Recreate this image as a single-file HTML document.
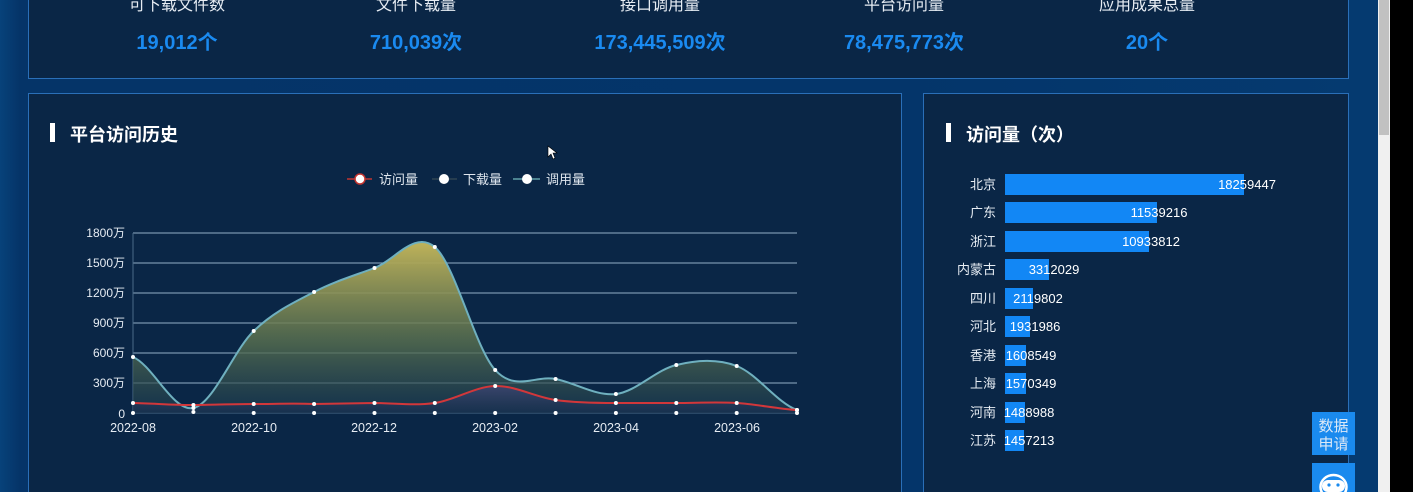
<!DOCTYPE html>
<html><head><meta charset="utf-8"><style>
*{margin:0;padding:0;box-sizing:border-box}
html,body{width:1413px;height:492px;overflow:hidden}
body{background:#000;position:relative;font-family:"Liberation Sans","Noto Sans CJK SC",sans-serif}
#bg{position:absolute;left:0;top:0;width:1378px;height:492px;background:linear-gradient(90deg,#07427a 0,#053468 20px,#04356a 900px,#053a70 1378px)}
.panel{position:absolute;background:#0a2646;border:1px solid #2a6fb8}
.sb{position:absolute;left:1378px;top:0;width:12px;height:492px;background:#f0f0f0}
.thumb{position:absolute;left:1379px;top:0;width:10px;height:135px;background:#c1c1c1}
.stat{position:absolute;width:240px;text-align:center}
.stat .l{color:#e6ecf3;font-size:16px;position:absolute;top:-9px;width:100%}
.stat .v{color:#1a8af0;font-size:20px;font-weight:bold;position:absolute;top:26px;width:100%}
.title{position:absolute;color:#fff;font-size:18px;font-weight:bold}
.title:before{content:"";position:absolute;left:-20px;top:2px;width:5px;height:19px;background:#fff}
</style></head><body>
<div id="bg"></div>
<div class="panel" style="left:28px;top:-2px;width:1321px;height:81px;"></div>
<div class="stat" style="left:57px;top:0"><div class="l">可下载文件数</div><div class="v">19,012个</div></div>
<div class="stat" style="left:296px;top:0"><div class="l">文件下载量</div><div class="v">710,039次</div></div>
<div class="stat" style="left:540px;top:0"><div class="l">接口调用量</div><div class="v">173,445,509次</div></div>
<div class="stat" style="left:784px;top:0"><div class="l">平台访问量</div><div class="v">78,475,773次</div></div>
<div class="stat" style="left:1027px;top:0"><div class="l">应用成果总量</div><div class="v">20个</div></div>

<div class="panel" style="left:28px;top:93px;width:874px;height:399px;border-bottom:none"></div>
<div class="panel" style="left:923px;top:93px;width:426px;height:399px;border-bottom:none"></div>
<div class="title" style="left:70px;top:121px">平台访问历史</div>
<div class="title" style="left:966px;top:121px">访问量（次）</div>

<svg style="position:absolute;left:0;top:0" width="1378" height="492">
<defs>
<linearGradient id="ga" x1="0" y1="240" x2="0" y2="413" gradientUnits="userSpaceOnUse"><stop offset="0" stop-color="#c2b55a"/><stop offset="0.6" stop-color="#58704f" stop-opacity=".8"/><stop offset="1" stop-color="#1a3a50" stop-opacity=".6"/></linearGradient>
<linearGradient id="gr" x1="0" y1="380" x2="0" y2="413" gradientUnits="userSpaceOnUse"><stop offset="0" stop-color="#4a4a80" stop-opacity=".8"/><stop offset="1" stop-color="#1a3050" stop-opacity=".5"/></linearGradient>
</defs>
<g font-size="13" fill="#dfe6ee">
<line x1="347" y1="179" x2="372" y2="179" stroke="#c23531" stroke-width="1.5"/><circle cx="360" cy="179" r="5" fill="#fff" stroke="#c23531" stroke-width="1.5"/><text x="379" y="184">访问量</text>
<line x1="432" y1="179" x2="457" y2="179" stroke="#2f4554" stroke-width="1.5"/><circle cx="444" cy="179" r="5" fill="#fff"/><text x="463" y="184">下载量</text>
<line x1="513" y1="179" x2="540" y2="179" stroke="#61a0a8" stroke-width="1.5"/><circle cx="527" cy="179" r="5" fill="#fff"/><text x="546" y="184">调用量</text>
</g>
<g stroke="#8aa6c0" stroke-width="1.3" opacity=".85">
<line x1="133" y1="233" x2="797" y2="233"/><line x1="133" y1="263" x2="797" y2="263"/><line x1="133" y1="293" x2="797" y2="293"/><line x1="133" y1="323" x2="797" y2="323"/><line x1="133" y1="353" x2="797" y2="353"/><line x1="133" y1="383" x2="797" y2="383"/>
</g>
<line x1="133" y1="413" x2="797" y2="413" stroke="#4a6a88" stroke-width="1"/>
<line x1="133" y1="233" x2="133" y2="413" stroke="#4a6a88" stroke-width="1"/>
<g font-size="12" fill="#e6ecf3" text-anchor="end">
<text x="125" y="237">1800万</text><text x="125" y="267">1500万</text><text x="125" y="297">1200万</text><text x="125" y="327">900万</text><text x="125" y="357">600万</text><text x="125" y="387">300万</text><text x="125" y="418">0</text>
</g>
<g font-size="12.5" fill="#e6ecf3" text-anchor="middle">
<text x="133" y="432">2022-08</text><text x="254" y="432">2022-10</text><text x="374" y="432">2022-12</text><text x="495" y="432">2023-02</text><text x="616" y="432">2023-04</text><text x="737" y="432">2023-06</text>
</g>
<path d="M133,357 C153.1,365.5 173.3,412.3 193.4,408 C213.5,403.7 233.6,350.3 253.7,331 C273.8,311.7 294,302.5 314.1,292 C334.2,281.5 354.4,275.5 374.5,268 C394.6,260.5 414.7,230 434.8,247 C454.9,264 475.1,348 495.2,370 C515.3,392 535.5,375 555.6,379 C575.7,383 595.8,396.3 615.9,394 C636,391.7 656.2,369.7 676.3,365 C696.4,360.3 716.6,358.5 736.7,366 C756.8,373.5 776.9,402.7 797,410 L797,413 L133,413Z" fill="url(#ga)"/>
<path d="M133,403 C153,403.3 173,405.2 193.4,405 C213.5,404.8 233.6,404 253.7,404 C273.8,404 294,403.2 314.1,404 C334.2,403.8 354.4,403.2 374.5,403 C394.6,403.2 414.7,405.8 434.8,403 C454.9,400 475.1,386.5 495.2,386 C515.3,385.5 535.5,397.2 555.6,400 C575.7,402.8 595.8,403 615.9,403 C636,403 656.2,403 676.3,403 C696.4,403 716.6,401.8 736.7,403 C756.8,404.2 776.9,408.8 797,410 L797,413 L133,413Z" fill="url(#gr)"/>
<path d="M133,357 C153.1,365.5 173.3,412.3 193.4,408 C213.5,403.7 233.6,350.3 253.7,331 C273.8,311.7 294,302.5 314.1,292 C334.2,281.5 354.4,275.5 374.5,268 C394.6,260.5 414.7,230 434.8,247 C454.9,264 475.1,348 495.2,370 C515.3,392 535.5,375 555.6,379 C575.7,383 595.8,396.3 615.9,394 C636,391.7 656.2,369.7 676.3,365 C696.4,360.3 716.6,358.5 736.7,366 C756.8,373.5 776.9,402.7 797,410" fill="none" stroke="#6fb0bf" stroke-width="2"/>
<path d="M133,403 C153,403.3 173,405.2 193.4,405 C213.5,404.8 233.6,404 253.7,404 C273.8,404 294,403.2 314.1,404 C334.2,403.8 354.4,403.2 374.5,403 C394.6,403.2 414.7,405.8 434.8,403 C454.9,400 475.1,386.5 495.2,386 C515.3,385.5 535.5,397.2 555.6,400 C575.7,402.8 595.8,403 615.9,403 C636,403 656.2,403 676.3,403 C696.4,403 716.6,401.8 736.7,403 C756.8,404.2 776.9,408.8 797,410" fill="none" stroke="#d2373a" stroke-width="2"/>
<g fill="#fff">
<circle cx="133" cy="357" r="2"/><circle cx="193.4" cy="408" r="2"/><circle cx="253.7" cy="331" r="2"/><circle cx="314.1" cy="292" r="2"/><circle cx="374.5" cy="268" r="2"/><circle cx="434.8" cy="247" r="2"/><circle cx="495.2" cy="370" r="2"/><circle cx="555.6" cy="379" r="2"/><circle cx="615.9" cy="394" r="2"/><circle cx="676.3" cy="365" r="2"/><circle cx="736.7" cy="366" r="2"/><circle cx="797" cy="410" r="2"/>
<circle cx="133" cy="403" r="2"/><circle cx="193.4" cy="405" r="2"/><circle cx="253.7" cy="404" r="2"/><circle cx="314.1" cy="404" r="2"/><circle cx="374.5" cy="403" r="2"/><circle cx="434.8" cy="403" r="2"/><circle cx="495.2" cy="386" r="2"/><circle cx="555.6" cy="400" r="2"/><circle cx="615.9" cy="403" r="2"/><circle cx="676.3" cy="403" r="2"/><circle cx="736.7" cy="403" r="2"/><circle cx="797" cy="410" r="2"/>
<circle cx="133" cy="413" r="2"/><circle cx="193.4" cy="412" r="2"/><circle cx="253.7" cy="413" r="2"/><circle cx="314.1" cy="413" r="2"/><circle cx="374.5" cy="413" r="2"/><circle cx="434.8" cy="413" r="2"/><circle cx="495.2" cy="413" r="2"/><circle cx="555.6" cy="413" r="2"/><circle cx="615.9" cy="413" r="2"/><circle cx="676.3" cy="413" r="2"/><circle cx="736.7" cy="413" r="2"/><circle cx="797" cy="413" r="2"/>
</g>
<path d="M548,146 L548,157 L551,154 L553,159 L555,158 L553,153 L557,153Z" fill="#fff" stroke="#000" stroke-width=".6"/>
<g fill="#1287f5">
<rect x="1005" y="174" width="239" height="21"/><rect x="1005" y="202" width="152" height="21"/><rect x="1005" y="231" width="144" height="21"/><rect x="1005" y="259" width="44" height="21"/><rect x="1005" y="288" width="28" height="21"/><rect x="1005" y="316" width="25" height="21"/><rect x="1005" y="345" width="21" height="21"/><rect x="1005" y="373" width="21" height="21"/><rect x="1005" y="402" width="20" height="21"/><rect x="1005" y="430" width="19" height="21"/>
</g>
<g font-size="13" fill="#e6ecf3" text-anchor="end">
<text x="996" y="189">北京</text><text x="996" y="217">广东</text><text x="996" y="246">浙江</text><text x="996" y="274">内蒙古</text><text x="996" y="303">四川</text><text x="996" y="331">河北</text><text x="996" y="360">香港</text><text x="996" y="388">上海</text><text x="996" y="417">河南</text><text x="996" y="445">江苏</text>
</g>
<g font-size="13" fill="#fff" text-anchor="middle">
<text x="1247" y="189">18259447</text><text x="1159" y="217">11539216</text><text x="1151" y="246">10933812</text><text x="1054" y="274">3312029</text><text x="1038" y="303">2119802</text><text x="1035" y="331">1931986</text><text x="1031" y="360">1608549</text><text x="1031" y="388">1570349</text><text x="1029" y="417">1488988</text><text x="1029" y="445">1457213</text>
</g>
<rect x="1312" y="412" width="43" height="43" fill="#1a8aee"/>
<text x="1333.5" y="431" font-size="15" fill="#dce9f7" text-anchor="middle">数据</text>
<text x="1333.5" y="449" font-size="15" fill="#dce9f7" text-anchor="middle">申请</text>
<rect x="1312" y="463" width="43" height="29" fill="#1a8aee"/>
<ellipse cx="1333.5" cy="487" rx="13" ry="12" fill="none" stroke="#fff" stroke-width="2.5"/>
<rect x="1322" y="480" width="23" height="12" rx="6" fill="#fff"/>
<circle cx="1329" cy="485" r="1.6" fill="#1a8aee"/><circle cx="1338" cy="485" r="1.6" fill="#1a8aee"/>
</svg>
<div class="sb"></div><div class="thumb"></div>
</body></html>
